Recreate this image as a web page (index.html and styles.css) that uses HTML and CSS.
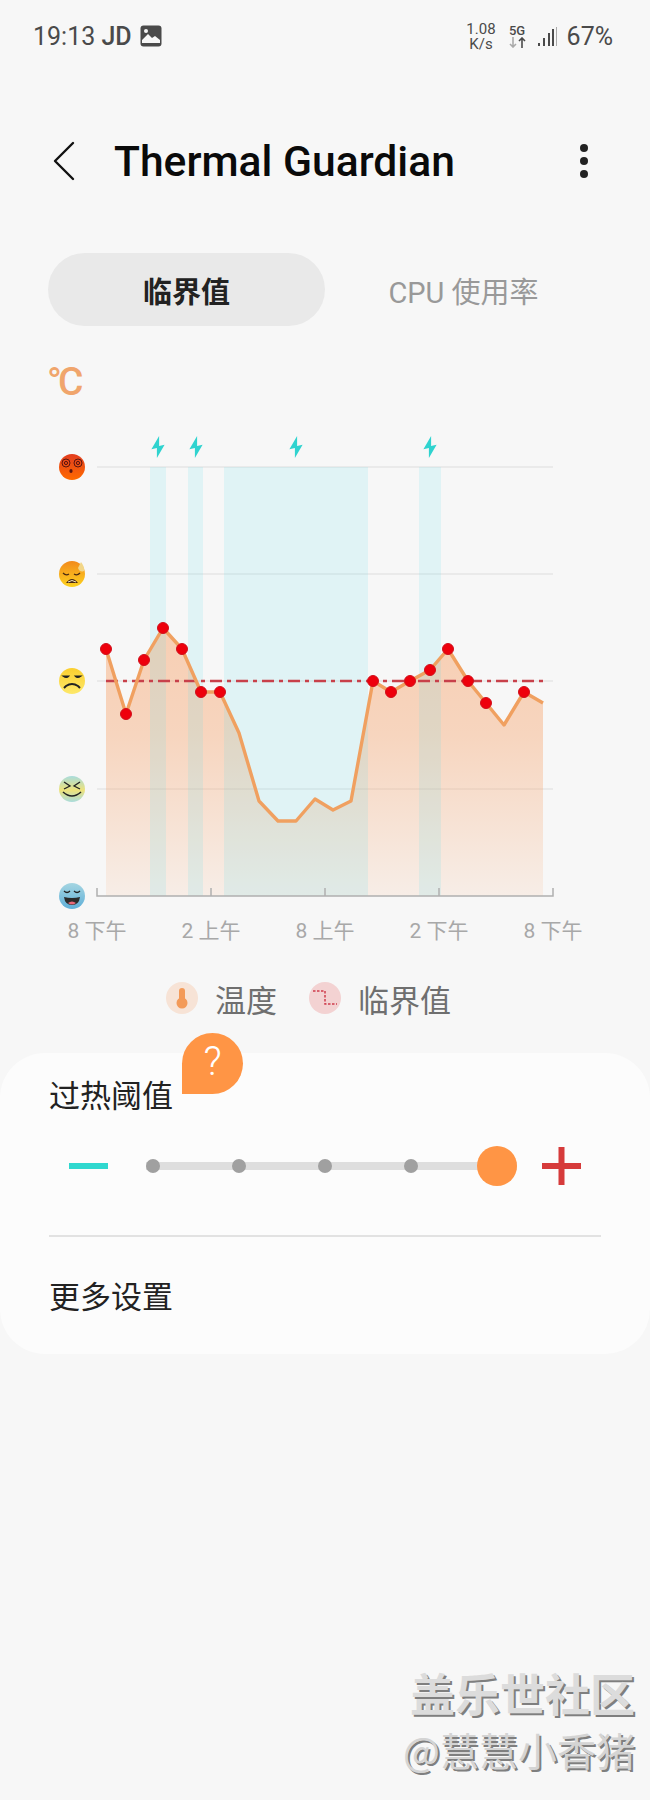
FILE: index.html
```html
<!DOCTYPE html>
<html lang="zh-CN">
<head>
    <meta charset="UTF-8">
    <meta name="viewport" content="width=device-width, initial-scale=1.0">
    <title>Thermal Guardian</title>
    <link rel="stylesheet" href="styles.css">
</head>
<body>

    <div class="status-bar">
        <div class="status-left">
            <span>19:13 <span class="carrier">JD</span></span>
            <svg class="status-pic" width="22" height="22" viewBox="0 0 22 22">
                <rect x="0.5" y="0.5" width="21" height="21" rx="3" fill="#4a4a4a"/>
                <path d="M2 18 L2 15 L8 9 L12 13 L15 11 L20 15 L20 18 Z" fill="#f7f7f7"/>
                <circle cx="6" cy="6" r="2" fill="#f7f7f7"/>
            </svg>
        </div>
        <div class="status-right">
            <div class="net-speed"><span>1.08</span><span>K/s</span></div>
            <div class="net-type">
                <span>5G</span>
                <svg width="17" height="11" viewBox="0 0 17 11">
                    <path d="M4 0 V10 M1 7 L4 10 L7 7" fill="none" stroke="#aaa" stroke-width="1.6"/>
                    <path d="M13 11 V1 M10 4 L13 1 L16 4" fill="none" stroke="#4a4a4a" stroke-width="1.6"/>
                </svg>
            </div>
            <svg class="signal" width="19" height="19" viewBox="0 0 19 19">
                <rect x="0" y="16" width="2" height="3" fill="#4a4a4a"/>
                <rect x="5" y="11" width="2" height="8" fill="#4a4a4a"/>
                <rect x="10" y="6" width="2" height="13" fill="#4a4a4a"/>
                <rect x="14" y="2" width="2" height="17" fill="#4a4a4a"/>
                <rect x="18" y="0" width="1" height="19" fill="#aaa"/>
            </svg>
            <span class="battery">67%</span>
        </div>
    </div>

    <div class="app-bar">
        <svg class="back" width="22" height="40" viewBox="0 0 22 40">
            <path d="M20 2 L2 20 L20 38" fill="none" stroke="#111" stroke-width="2.4" stroke-linecap="round" stroke-linejoin="round"/>
        </svg>
        <h1 class="title">Thermal Guardian</h1>
        <div class="kebab"><i></i><i></i><i></i></div>
    </div>

    <div class="tabs">
        <div class="tab tab-active">临界值</div>
        <div class="tab">CPU 使用率</div>
    </div>

    <div class="unit">°C</div>

    <!-- viewBox uses page coordinates so the numbers are easy to read off the screenshot -->
    <svg class="chart" width="650" height="490" viewBox="0 420 650 490">
        <defs>
            <linearGradient id="area-fill" x1="0" y1="628" x2="0" y2="896" gradientUnits="userSpaceOnUse">
                <stop offset="0" stop-color="#f7a670" stop-opacity="0.5"/>
                <stop offset="0.4" stop-color="#f7a670" stop-opacity="0.42"/>
                <stop offset="1" stop-color="#f7a670" stop-opacity="0.12"/>
            </linearGradient>
            <linearGradient id="face-red" x1="0" y1="0" x2="0" y2="1">
                <stop offset="0" stop-color="#e23d1f"/>
                <stop offset="1" stop-color="#ff6a00"/>
            </linearGradient>
            <linearGradient id="face-orange" x1="0" y1="0" x2="0" y2="1">
                <stop offset="0" stop-color="#f28a1c"/>
                <stop offset="1" stop-color="#fdd21f"/>
            </linearGradient>
            <linearGradient id="face-yellow" x1="0" y1="0" x2="0" y2="1">
                <stop offset="0" stop-color="#fbcf2e"/>
                <stop offset="1" stop-color="#fde86a"/>
            </linearGradient>
            <linearGradient id="face-mint" x1="0" y1="0" x2="0" y2="1">
                <stop offset="0" stop-color="#a9dcdc"/>
                <stop offset="0.55" stop-color="#eee27a"/>
                <stop offset="1" stop-color="#a9dcdc"/>
            </linearGradient>
            <linearGradient id="face-blue" x1="0" y1="0" x2="0" y2="1">
                <stop offset="0" stop-color="#a5d6e2"/>
                <stop offset="1" stop-color="#5fafd8"/>
            </linearGradient>
        </defs>

        <g class="grid">
            <path d="M97 467 H553"/>
            <path d="M97 574 H553"/>
            <path d="M97 681 H553"/>
            <path d="M97 789 H553"/>
        </g>

        <path d="M106 896 V649 L126 714 L144 660 L163 628 L182 649 L201 692 L220 692 L239 733 L259 801 L278 821 L296 821 L315 799 L333 810 L351 801 L373 681 L391 692 L410 681 L430 670 L448 649 L468 681 L486 703 L504 725 L524 692 L543 703 V896 Z" fill="url(#area-fill)"/>

        <g class="bands">
            <rect x="150" y="467" width="16" height="429"/>
            <rect x="188" y="467" width="15" height="429"/>
            <rect x="224" y="467" width="144" height="429"/>
            <rect x="419" y="467" width="22" height="429"/>
        </g>

        <g class="bolts">
            <path transform="translate(158 447) scale(1.1)" d="M1 -10 L-6 2 L-1 1 L-1 10 L6 -2 L1 -1 Z"/>
            <path transform="translate(196 447) scale(1.1)" d="M1 -10 L-6 2 L-1 1 L-1 10 L6 -2 L1 -1 Z"/>
            <path transform="translate(296 447) scale(1.1)" d="M1 -10 L-6 2 L-1 1 L-1 10 L6 -2 L1 -1 Z"/>
            <path transform="translate(430 447) scale(1.1)" d="M1 -10 L-6 2 L-1 1 L-1 10 L6 -2 L1 -1 Z"/>
        </g>

        <path class="axis" d="M97 888 V896 H553 V888 M211 888 V896 M325 888 V896 M439 888 V896"/>

        <path class="threshold" d="M106 681 H543"/>

        <path class="temp-line" d="M106 649 L126 714 L144 660 L163 628 L182 649 L201 692 L220 692 L239 733 L259 801 L278 821 L296 821 L315 799 L333 810 L351 801 L373 681 L391 692 L410 681 L430 670 L448 649 L468 681 L486 703 L504 725 L524 692 L543 703"/>

        <g class="points">
            <circle cx="106" cy="649" r="5"/>
            <circle cx="126" cy="714" r="5"/>
            <circle cx="144" cy="660" r="5"/>
            <circle cx="163" cy="628" r="5"/>
            <circle cx="182" cy="649" r="5"/>
            <circle cx="201" cy="692" r="5"/>
            <circle cx="220" cy="692" r="5"/>
            <circle cx="373" cy="681" r="5"/>
            <circle cx="391" cy="692" r="5"/>
            <circle cx="410" cy="681" r="5"/>
            <circle cx="430" cy="670" r="5"/>
            <circle cx="448" cy="649" r="5"/>
            <circle cx="468" cy="681" r="5"/>
            <circle cx="486" cy="703" r="5"/>
            <circle cx="524" cy="692" r="5"/>
        </g>

        <!-- faces, hottest on top -->
        <g transform="translate(72 467)">
            <circle r="13" fill="url(#face-red)"/>
            <circle cx="-6" cy="-4" r="4" fill="none" stroke="#5a1510" stroke-width="1"/>
            <circle cx="-6" cy="-4" r="1.6" fill="none" stroke="#5a1510" stroke-width="1"/>
            <circle cx="6" cy="-4" r="4" fill="none" stroke="#5a1510" stroke-width="1"/>
            <circle cx="6" cy="-4" r="1.6" fill="none" stroke="#5a1510" stroke-width="1"/>
            <ellipse cx="-1" cy="4" rx="1.6" ry="2" fill="#5a1510"/>
        </g>
        <g transform="translate(72 574)">
            <circle r="13" fill="url(#face-orange)"/>
            <path d="M-9 -1 Q-6 2 -3 0 M8 -1 Q5 2 2 0" fill="none" stroke="#4a2a10" stroke-width="1.3"/>
            <path d="M-6 9 Q0 1 6 9 Z" fill="#4a2a10"/>
            <path d="M-4 8 Q0 5 4 8" fill="none" stroke="#f4e8c0" stroke-width="1"/>
            <path d="M9 -12 Q13 -7 12 -3 Q8 -1 6 -6 Z" fill="#f2d688"/>
        </g>
        <g transform="translate(72 681)">
            <circle r="13" fill="url(#face-yellow)"/>
            <path d="M-9 -5 Q-5 -2 -3 -5 Z M9 -5 Q5 -2 3 -5 Z" fill="#222" stroke="#222" stroke-width="1.2"/>
            <path d="M-8 7 L-6 5 Q0 1 6 5 L8 7" fill="none" stroke="#222" stroke-width="2"/>
        </g>
        <g transform="translate(72 789)">
            <circle r="13" fill="url(#face-mint)"/>
            <path d="M-8 -7 L-2 -3 L-8 0 M8 -7 L2 -3 L8 0" fill="none" stroke="#222" stroke-width="1.3"/>
            <path d="M-9 3 Q0 11 9 3" fill="none" stroke="#222" stroke-width="1.6"/>
        </g>
        <g transform="translate(72 896)">
            <circle r="13" fill="url(#face-blue)"/>
            <path d="M-8 -5 Q-5 -2 -2 -5 M2 -5 Q5 -2 8 -5" fill="none" stroke="#222" stroke-width="1.2"/>
            <path d="M-8 1 Q0 3 8 1 Q7 9 0 9 Q-7 9 -8 1 Z" fill="#2a2a2a"/>
            <path d="M-4 7 Q0 4 4 7 Q0 10 -4 7 Z" fill="#e8697a"/>
        </g>
    </svg>

    <div class="time-labels">
        <span>8 下午</span>
        <span>2 上午</span>
        <span>8 上午</span>
        <span>2 下午</span>
        <span>8 下午</span>
    </div>

    <div class="legend">
        <svg class="legend-icon" width="32" height="32" viewBox="0 0 32 32">
            <circle cx="16" cy="16" r="16" fill="#f7e3d6"/>
            <rect x="13" y="6" width="6" height="16" rx="3" fill="#f39a58"/>
            <circle cx="16" cy="21" r="5.5" fill="#f39a58"/>
        </svg>
        <span class="legend-temp">温度</span>
        <svg class="legend-icon" width="32" height="32" viewBox="0 0 32 32">
            <circle cx="16" cy="16" r="16" fill="#f3d2d2"/>
            <path d="M4 9 H16 V22 H28" fill="none" stroke="#cf3c4c" stroke-width="1.5" stroke-dasharray="2.5 1.5"/>
        </svg>
        <span>临界值</span>
    </div>

    <div class="card">
        <div class="row-label">
            过热阈值
            <div class="help-bubble">?</div>
        </div>
        <div class="slider-row">
            <div class="minus"></div>
            <div class="track">
                <i class="dot"></i>
                <i class="dot"></i>
                <i class="dot"></i>
                <i class="dot"></i>
                <i class="thumb"></i>
            </div>
            <svg class="plus" width="39" height="38" viewBox="0 0 39 38">
                <path d="M0 19 H39 M19.5 0 V38" fill="none" stroke="#d63b3b" stroke-width="6"/>
            </svg>
        </div>
        <div class="divider"></div>
        <div class="row-label row-more">更多设置</div>
    </div>

    <div class="watermark">
        <div class="wm-top">盖乐世社区</div>
        <div class="wm-bottom">@慧慧小香猪</div>
    </div>

</body>
</html>
```

FILE: styles.css
```css
body {
    margin: 0;
    width: 650px;
    height: 1800px;
    position: relative;
    overflow: hidden;
    background-color: #f7f7f7;
    font-family: Roboto, "Noto Sans CJK SC", sans-serif;
    color: #222;
}

/* Status bar */
.status-bar {
    height: 72px;
    display: flex;
    justify-content: space-between;
    align-items: center;
    padding: 0 37px 0 33px;
    font-size: 25px;
    color: #4a4a4a;
}

.status-left {
    display: flex;
    align-items: center;
    gap: 8px;
}

.carrier {
    font-weight: 500;
}

.status-right {
    display: flex;
    align-items: center;
}

.net-speed {
    display: flex;
    flex-direction: column;
    align-items: center;
    gap: 1px;
    font-size: 15px;
    line-height: 14px;
}

.net-type {
    display: flex;
    flex-direction: column;
    align-items: center;
    margin-left: 13px;
    font-size: 13px;
    font-weight: 500;
    line-height: 12px;
}

.signal {
    margin-left: 12px;
}

.battery {
    margin-left: 10px;
}

/* App bar */
.app-bar {
    height: 50px;
    margin-top: 64px;
    padding-left: 53px;
    display: flex;
    align-items: center;
}

.title {
    margin: 0 0 0 39px;
    font-size: 42.6px;
    font-weight: 500;
    color: #0a0a0a;
}

.kebab {
    margin-left: auto;
    margin-right: 62px;
    display: flex;
    flex-direction: column;
    gap: 5px;
}

.kebab i {
    width: 8px;
    height: 8px;
    border-radius: 50%;
    background: #222;
}

/* Tabs */
.tabs {
    display: flex;
    margin: 67px 48px 0 48px;
    height: 73px;
}

.tab {
    flex: 1;
    display: flex;
    justify-content: center;
    align-items: center;
    border-radius: 37px;
    font-size: 29px;
    color: #999;
}

.tab-active {
    background: #e9e9e9;
    color: #222;
    font-weight: 700;
}

/* Chart */
.unit {
    height: 94px;
    box-sizing: border-box;
    padding: 35px 0 0 47px;
    font-size: 39px;
    line-height: 42px;
    font-weight: 500;
    letter-spacing: -4px;
    color: #f0a56c;
}

.chart {
    display: block;
}

.grid path {
    stroke: #e6e6e6;
    stroke-width: 1.5;
    fill: none;
}

.bands rect {
    fill: rgba(94, 220, 233, 0.15);
}

.bolts path {
    fill: #2fd3cf;
}

.axis {
    fill: none;
    stroke: #b0b0b0;
    stroke-width: 1.5;
}

.threshold {
    fill: none;
    stroke: #c8404a;
    stroke-width: 2.4;
    stroke-dasharray: 12 5 4 5;
}

.temp-line {
    fill: none;
    stroke: #f0a060;
    stroke-width: 3.4;
    stroke-linejoin: round;
}

.points circle {
    r: 5.5px;
    fill: #ee000c;
    stroke: #d0101c;
    stroke-width: 1;
}

.time-labels {
    display: flex;
    height: 38px;
    padding-left: 40px;
    align-items: center;
    font-size: 21px;
    color: #a8a8a8;
}

.time-labels span {
    width: 114px;
    text-align: center;
}

/* Legend */
.legend {
    display: flex;
    align-items: center;
    height: 40px;
    margin-top: 30px;
    padding-left: 166px;
    font-size: 31px;
    color: #6f6f6f;
}

.legend-icon {
    margin-right: 17px;
}

.legend-temp {
    margin-right: 32px;
}

/* Bottom card */
.card {
    box-sizing: border-box;
    height: 301px;
    margin-top: 35px;
    padding-top: 24px;
    border-radius: 45px;
    background: #fcfcfc;
}

.row-label {
    position: relative;
    height: 40px;
    margin-left: 49px;
    font-size: 31px;
    line-height: 40px;
}

.help-bubble {
    position: absolute;
    left: 133px;
    top: -44px;
    width: 61px;
    height: 61px;
    border-radius: 50% 50% 50% 0;
    background: #ff9545;
    color: #fff;
    font-size: 40px;
    font-weight: 300;
    line-height: 58px;
    text-align: center;
}

.slider-row {
    display: flex;
    align-items: center;
    height: 40px;
    margin-top: 29px;
    padding-left: 69px;
}

.minus {
    width: 39px;
    height: 6px;
    background: #2fd8cf;
}

.track {
    display: flex;
    align-items: center;
    gap: 72px;
    margin-left: 38px;
    background: linear-gradient(#dedede, #dedede) center / 100% 8px no-repeat;
}

.dot {
    width: 14px;
    height: 14px;
    border-radius: 50%;
    background: #a0a0a0;
}

.thumb {
    width: 40px;
    height: 40px;
    margin-left: -13px;
    border-radius: 50%;
    background: #ff9545;
}

.plus {
    margin-left: 25px;
}

.divider {
    height: 2px;
    margin: 49px 49px 0;
    background: #e2e2e2;
}

.row-more {
    margin-top: 41px;
}

/* Watermark sits over the page */
.watermark {
    position: absolute;
    right: 15px;
    top: 1662px;
    text-align: right;
    font-family: "Noto Sans CJK SC", sans-serif;
}

.wm-top {
    font-size: 45px;
    line-height: 62px;
    font-weight: 700;
    color: #dcdcdc;
    text-shadow: 2px 2px 0 #7f7f7f;
}

.wm-bottom {
    font-size: 39px;
    line-height: 50px;
    color: #d4d4d4;
    text-shadow: 2px 2px 0 #7f7f7f;
}
```
